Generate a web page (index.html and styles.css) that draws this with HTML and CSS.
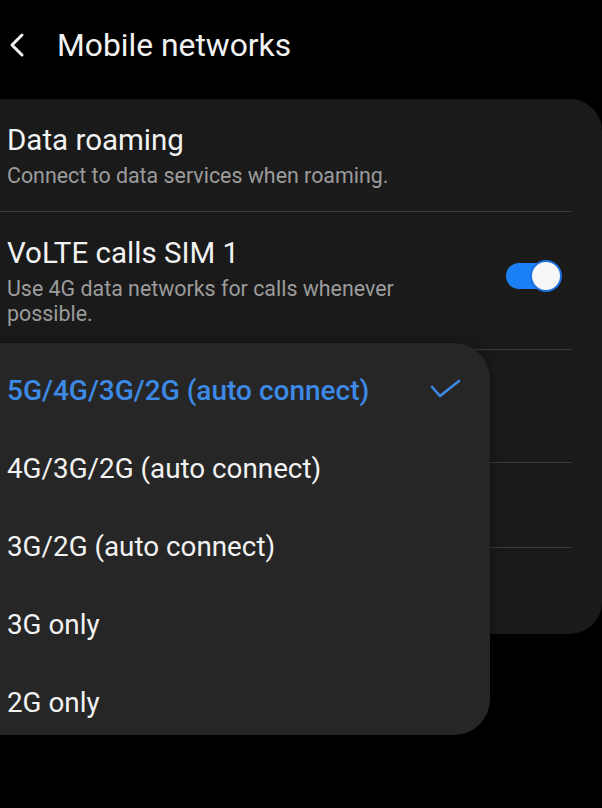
FILE: index.html
```html
<!DOCTYPE html>
<html lang="en">
<head>
    <meta charset="UTF-8">
    <meta name="viewport" content="width=device-width, initial-scale=1.0">
    <title>Mobile networks</title>
    <link rel="stylesheet" href="styles.css">
</head>
<body>
<div class="screen">
    <header class="top-bar">
        <span class="back">
            <svg width="18" height="26" viewBox="0 0 18 26"><path d="M14 3 L4 13 L14 23" fill="none" stroke="#f2f2f2" stroke-width="3" stroke-linecap="round" stroke-linejoin="round"/></svg>
        </span>
        <h1 class="title">Mobile networks</h1>
    </header>

    <div class="card">
        <div class="row row-1">
            <div class="row-text">
                <div class="row-title">Data roaming</div>
                <div class="row-sub">Connect to data services when roaming.</div>
            </div>
        </div>
        <div class="row row-2">
            <div class="row-text">
                <div class="row-title">VoLTE calls SIM 1</div>
                <div class="row-sub">Use 4G data networks for calls whenever possible.</div>
            </div>
            <div class="switch on"><div class="knob"></div></div>
        </div>
        <!-- rows below are covered by the popup -->
        <div class="row row-3"></div>
        <div class="row row-4"></div>
        <div class="row row-5 last"></div>
    </div>

    <div class="dropdown">
        <ul class="options">
            <li class="option selected">
                <span>5G/4G/3G/2G (auto connect)</span>
                <svg class="check" width="32" height="22" viewBox="0 0 32 22"><path d="M2 8 L10 17 L29 2" fill="none" stroke="#3d8ae6" stroke-width="2.6" stroke-linecap="round" stroke-linejoin="round"/></svg>
            </li>
            <li class="option"><span>4G/3G/2G (auto connect)</span></li>
            <li class="option"><span>3G/2G (auto connect)</span></li>
            <li class="option"><span>3G only</span></li>
            <li class="option"><span>2G only</span></li>
        </ul>
    </div>
</div>
</body>
</html>
```

FILE: styles.css
```css
html, body { margin: 0; padding: 0; background: #000; }
body { font-family: Roboto, "Liberation Sans", sans-serif; color: #f2f2f2; overflow: hidden; }
.screen { position: relative; width: 602px; height: 808px; overflow: hidden; }

/* header */
.top-bar { height: 99px; display: flex; align-items: center; padding-left: 8px; box-sizing: border-box; padding-bottom: 10px; }
.back { width: 18px; height: 26px; display: flex; }
.title { margin: 0 0 0 31px; font-size: 31.8px; font-weight: 400; }

/* settings card */
.card {
    margin-left: -30px; width: 632px; height: 535px;
    background: #1a1a1a; border-radius: 32px;
}
.row {
    display: flex; align-items: center; justify-content: space-between;
    margin-right: 30px; padding: 0 12px 0 37px; box-sizing: border-box;
    border-bottom: 1px solid #383838;
}
.row.last { border-bottom: none; }
.row-1 { height: 113px; }
.row-2 { height: 138px; }
.row-3 { height: 113px; }
.row-4 { height: 85px; }
.row-5 { height: 86px; }
.row-text { max-width: 440px; }
.row-title { font-size: 29.5px; line-height: 34px; }
.row-sub { font-size: 21.4px; line-height: 25px; color: #9c9c9c; margin-top: 6px; }

.switch { width: 54px; height: 26px; border-radius: 13px; background: #1b7ff5; position: relative; margin-top: -10px; flex-shrink: 0; }
.switch .knob {
    position: absolute; right: -2px; top: -3px;
    width: 28px; height: 28px; border-radius: 50%;
    background: #f7f7f9; border: 2px solid #1b6fe0;
}

/* popup menu */
.dropdown {
    position: absolute; left: -40px; top: 343px;
    width: 530px; height: 392px; overflow: hidden;
    background: #262626; border-radius: 36px;
    box-shadow: 0 0 12px rgba(0, 0, 0, 0.35);
}
.options { list-style: none; margin: 0; padding: 8px 0 0 0; }
.option {
    height: 78px; display: flex; align-items: center; justify-content: space-between;
    padding: 0 28px 0 47px; font-size: 27.8px; color: #f2f2f2;
}
.option.selected { color: #3d8ae6; font-weight: 500; font-size: 28px; }
```
